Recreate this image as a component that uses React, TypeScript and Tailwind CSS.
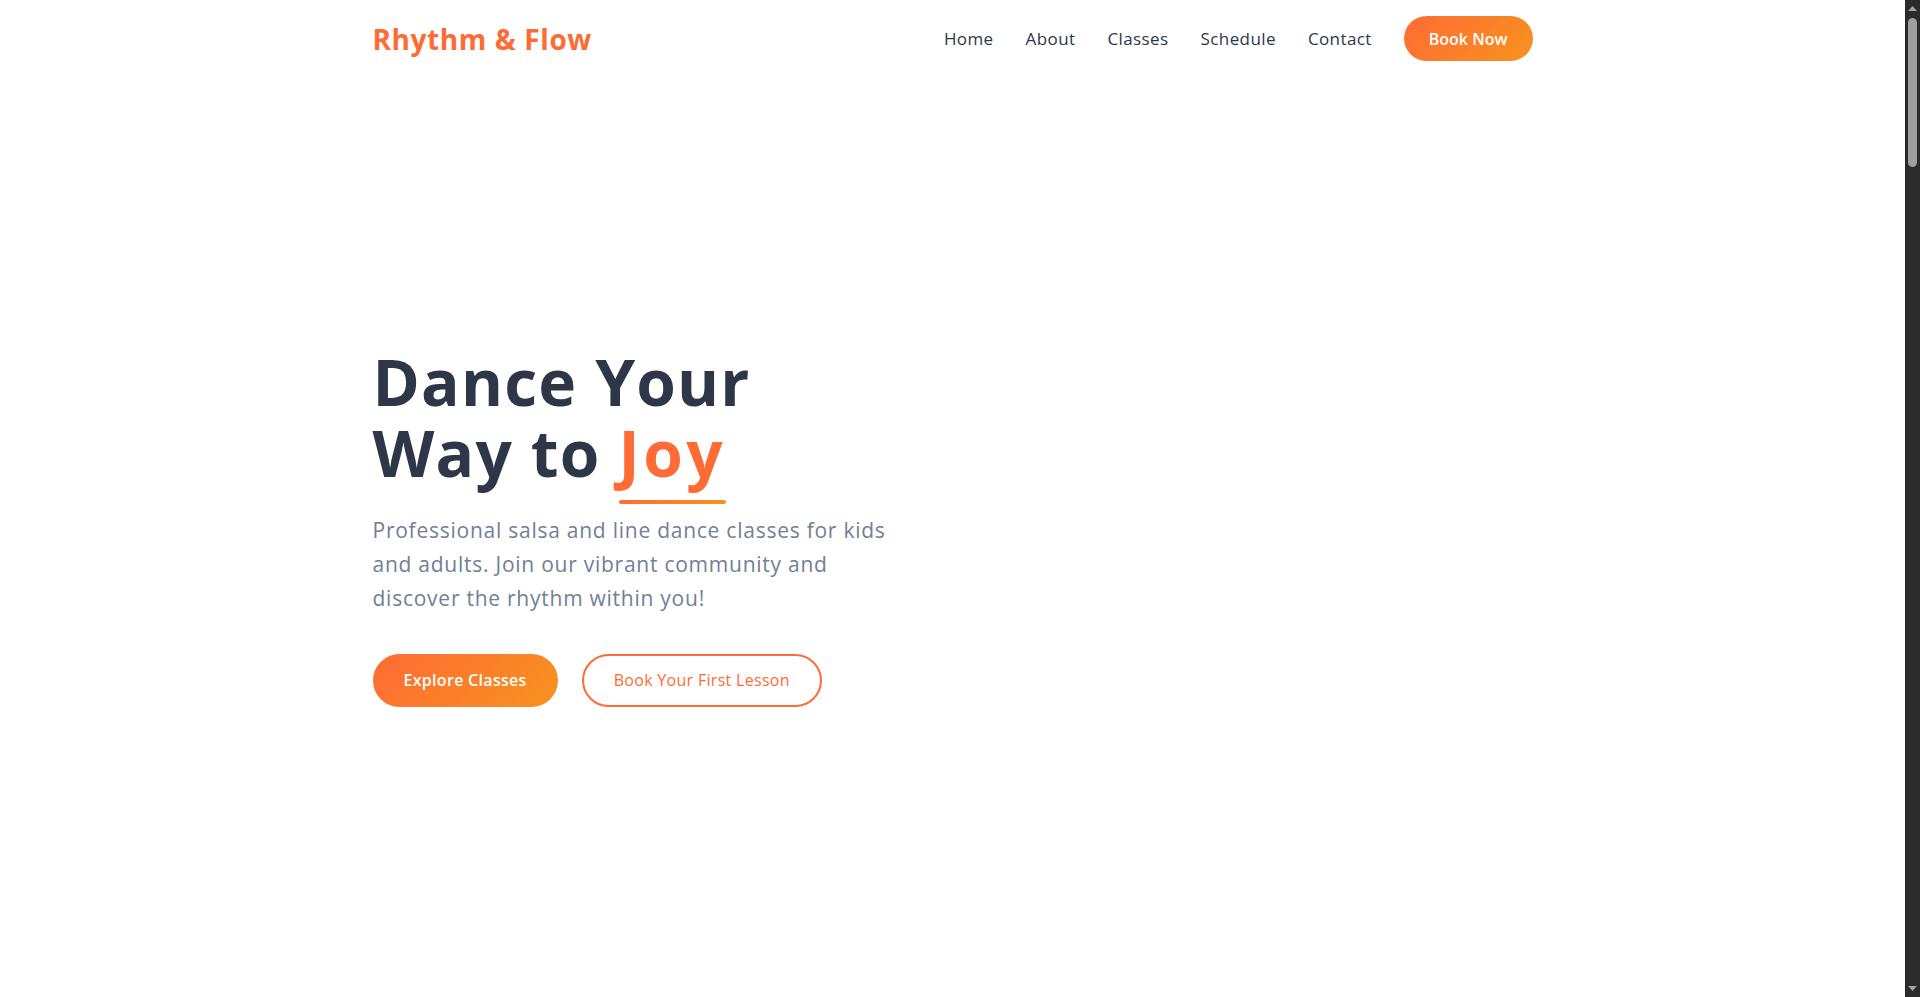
const navLinks = ['Home', 'About', 'Classes', 'Schedule', 'Contact'];

const gradient = 'bg-[linear-gradient(135deg,#ff6b35,#f7931e)]';

function Header() {
  return (
    <header className="bg-white">
      <div className="max-w-[1200px] mx-auto px-5 py-4 flex items-center justify-between">
        <a href="#" className="text-[28px] font-bold text-[#ff6b35] tracking-[0.6px]">
          Rhythm &amp; Flow
        </a>
        <nav className="flex items-center gap-8">
          {navLinks.map((link) => (
            <a key={link} href="#" className="text-[17px] font-medium text-[#2d3748] tracking-[0.4px]">
              {link}
            </a>
          ))}
          <a
            href="#"
            className={`${gradient} h-[45px] px-[25px] rounded-full flex items-center text-white font-semibold text-[16px]`}
          >
            Book Now
          </a>
        </nav>
      </div>
    </header>
  );
}

function Hero() {
  return (
    <section className="flex-1 flex items-center">
      <div className="max-w-[1200px] w-full mx-auto px-5 grid grid-cols-2 gap-16 -mt-[20px]">
        <div>
          <h1 className="text-[64px] leading-[1.1] font-bold text-[#2d3748] tracking-[1.2px]">
            Dance Your
            <br />
            Way to{' '}
            <span className="relative text-[#ff6b35] tracking-[3.5px]">
              Joy
              <span className={`absolute left-0 right-0 -bottom-[8px] h-1 rounded-full ${gradient}`} />
            </span>
          </h1>
          <p className="mt-[25px] max-w-[530px] text-[21px] leading-[34px] tracking-[0.75px] text-[#718096]">
            Professional salsa and line dance classes for kids and adults. Join our vibrant community
            and discover the rhythm within you!
          </p>
          <div className="mt-[39px] flex items-center gap-6">
            <a
              href="#"
              className={`${gradient} h-[53px] px-[31px] rounded-full flex items-center text-white font-semibold text-[16px] tracking-[0.3px]`}
            >
              Explore Classes
            </a>
            <a
              href="#"
              className="h-[53px] px-[30px] rounded-full flex items-center border-2 border-[#ff6b35] text-[#ff6b35] font-medium text-[16px] tracking-[0.3px]"
            >
              Book Your First Lesson
            </a>
          </div>
        </div>
        <div />
      </div>
    </section>
  );
}

function ScrollBar() {
  return (
    <aside className="w-[15px] h-full bg-[#2b2b2b] flex flex-col items-center shrink-0">
      <div className="h-[17px] w-full flex items-center justify-center">
        <svg width="9" height="5" viewBox="0 0 9 5">
          <polygon points="4.5,0 9,5 0,5" fill="#a3a3a3" />
        </svg>
      </div>
      <div className="flex-1 w-full flex flex-col items-center">
        <div className="mt-px h-[149px] w-[9px] rounded-full bg-[#9f9f9f]" />
      </div>
      <div className="h-[17px] w-full flex items-center justify-center">
        <svg width="9" height="5" viewBox="0 0 9 5">
          <polygon points="0,0 9,0 4.5,5" fill="#a3a3a3" />
        </svg>
      </div>
    </aside>
  );
}

export default function App() {
  return (
    <div className="h-screen flex overflow-hidden bg-white font-['Open_Sans',sans-serif]">
      <main className="flex-1 min-w-0 flex flex-col">
        <Header />
        <Hero />
      </main>
      <ScrollBar />
    </div>
  );
}
